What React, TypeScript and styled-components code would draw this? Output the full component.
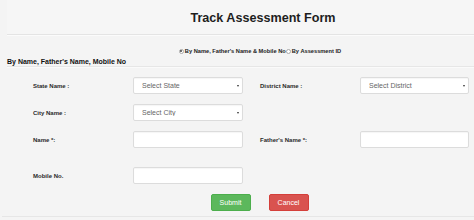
import React from "react";
import styled, { createGlobalStyle } from "styled-components";

const Global = createGlobalStyle`
  html, body { margin: 0; padding: 0; background: #f4f4f4; }
  body { font-family: "Liberation Sans", Arial, sans-serif; }
  * { box-sizing: border-box; }
`;

const Page = styled.div`
  width: 474px;
  height: 220px;
  background: #f4f4f4;
`;

const TitleBar = styled.div`
  height: 35px;
  margin-left: 7px;
  display: flex;
  align-items: center;
  justify-content: center;
  padding-left: 45px;
  padding-top: 1px;
  border-bottom: 1px solid #e4e4e4;
  box-shadow: 0 1px 0 #fbfbfb;
  background: #f6f6f6;
`;

const Title = styled.h1`
  margin: 0;
  font-size: 12.6px;
  font-weight: bold;
  color: #1e1e1e;
`;

const RadioRow = styled.div`
  display: flex;
  justify-content: center;
  align-items: center;
  padding-left: 46px;
  margin-top: 11px;
  height: 10px;
  font-size: 5.7px;
  font-weight: bold;
  color: #222;
`;

const RadioOption = styled.label`
  display: flex;
  align-items: center;
`;

const RadioDot = styled.span<{ $checked?: boolean }>`
  width: 5px;
  height: 5px;
  border-radius: 50%;
  border: 0.6px solid #aaa;
  background: #fff;
  margin-right: 1px;
  display: inline-flex;
  align-items: center;
  justify-content: center;
  &::after {
    content: "";
    width: 2px;
    height: 2px;
    border-radius: 50%;
    background: ${(p) => (p.$checked ? "#444" : "transparent")};
  }
`;

const SectionHead = styled.div`
  margin-left: 7px;
  height: 11px;
  padding-top: 2px;
  line-height: 8px;
  font-size: 7px;
  font-weight: bold;
  color: #111;
  border-bottom: 1px solid #e6e6e6;
  box-shadow: 0 1px 0 #fafafa;
`;

const Form = styled.div`
  padding-top: 10px;
  margin-left: 2px;
  border-bottom: 1px solid #e6e6e6;
  height: 150px;
`;

const Row = styled.div<{ $top: number }>`
  display: grid;
  grid-template-columns: 100px 110px 17px 100px 109px;
  align-items: center;
  margin-top: ${(p) => p.$top}px;
  padding-left: 31px;
  height: 17px;
`;

const Label = styled.span`
  font-size: 6px;
  font-weight: bold;
  color: #2a2a2a;
`;

const Spacer = styled.span``;

const SelectWrap = styled.div`
  position: relative;
  height: 17px;
`;

const Select = styled.select`
  display: block;
  appearance: none;
  -webkit-appearance: none;
  width: 100%;
  height: 17px;
  border: 1px solid #dcdcdc;
  border-radius: 2px;
  background: #fff;
  font-family: "Liberation Sans", Arial, sans-serif;
  font-size: 7px;
  color: #666;
  padding: 0 0 0 8px;
  outline: none;
  box-shadow: inset 0 1px 1px rgba(0, 0, 0, 0.04);
`;

const Arrow = styled.span`
  position: absolute;
  right: 4px;
  top: 50%;
  margin-top: -1px;
  width: 0;
  height: 0;
  border-left: 1.5px solid transparent;
  border-right: 1.5px solid transparent;
  border-top: 2.5px solid #333;
  pointer-events: none;
`;

const Input = styled.input`
  display: block;
  width: 100%;
  height: 17px;
  border: 1px solid #dcdcdc;
  border-radius: 2px;
  background: #fff;
  outline: none;
  padding: 0 6px;
  box-shadow: inset 0 1px 1px rgba(0, 0, 0, 0.04);
`;

const Buttons = styled.div`
  display: flex;
  justify-content: center;
  gap: 18px;
  padding-left: 43px;
  margin-top: 10px;
`;

const Button = styled.button<{ $variant: "ok" | "cancel" }>`
  width: 40px;
  height: 17px;
  border-radius: 2px;
  border: 1px solid ${(p) => (p.$variant === "ok" ? "#4cae4c" : "#d43f3a")};
  background: ${(p) => (p.$variant === "ok" ? "#5cb85c" : "#d9534f")};
  color: #fff;
  font-family: "Liberation Sans", Arial, sans-serif;
  font-size: 7px;
  padding: 0;
  cursor: pointer;
`;

function Dropdown({ placeholder }: { placeholder: string }) {
  return (
    <SelectWrap>
      <Select defaultValue="">
        <option value="">{placeholder}</option>
      </Select>
      <Arrow />
    </SelectWrap>
  );
}

export default function App() {
  return (
    <Page>
      <Global />
      <TitleBar>
        <Title>Track Assessment Form</Title>
      </TitleBar>
      <RadioRow>
        <RadioOption>
          <RadioDot $checked />
          By Name, Father's Name &amp; Mobile No
        </RadioOption>
        <RadioOption>
          <RadioDot />
          By Assessment ID
        </RadioOption>
      </RadioRow>
      <SectionHead>By Name, Father's Name, Mobile No</SectionHead>
      <Form>
        <Row $top={0}>
          <Label>State Name :</Label>
          <Dropdown placeholder="Select State" />
          <Spacer />
          <Label>District Name :</Label>
          <Dropdown placeholder="Select District" />
        </Row>
        <Row $top={10}>
          <Label>City Name :</Label>
          <Dropdown placeholder="Select City" />
        </Row>
        <Row $top={10}>
          <Label>Name *:</Label>
          <Input />
          <Spacer />
          <Label>Father's Name *:</Label>
          <Input />
        </Row>
        <Row $top={19}>
          <Label>Mobile No.</Label>
          <Input />
        </Row>
        <Buttons>
          <Button $variant="ok">Submit</Button>
          <Button $variant="cancel">Cancel</Button>
        </Buttons>
      </Form>
    </Page>
  );
}
